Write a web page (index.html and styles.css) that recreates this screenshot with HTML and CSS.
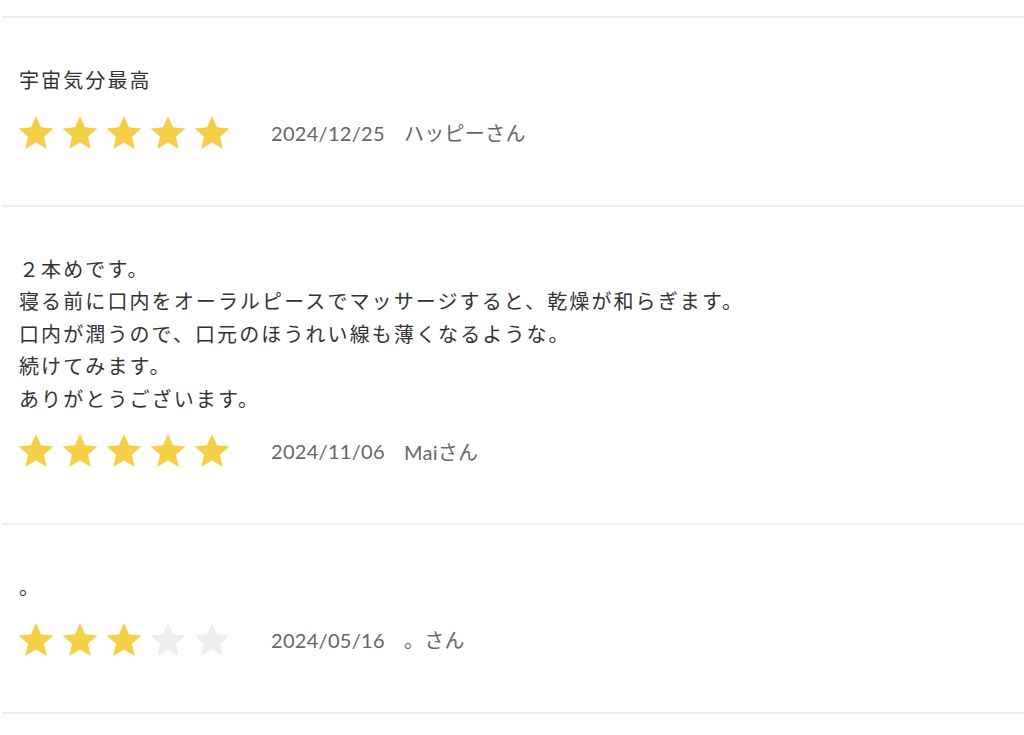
FILE: index.html
```html
<!DOCTYPE html>
<html lang="ja">
	<head>
		<meta charset="utf-8">
		<title>レビュー</title>
		<link rel="stylesheet" href="styles.css">
	</head>
	<body>
		<div id="wrap">
			<ul class="review-list">
				<li class="review">
					<p class="review-text">宇宙気分最高</p>
					<div class="review-meta">
						<div class="stars" data-rate="5"></div>
						<span class="date">2024/12/25</span>
						<span class="name">ハッピーさん</span>
					</div>
				</li>
				<li class="review">
					<p class="review-text">２本めです。<br>寝る前に口内をオーラルピースでマッサージすると、乾燥が和らぎます。<br>口内が潤うので、口元のほうれい線も薄くなるような。<br>続けてみます。<br>ありがとうございます。</p>
					<div class="review-meta">
						<div class="stars" data-rate="5"></div>
						<span class="date">2024/11/06</span>
						<span class="name">Maiさん</span>
					</div>
				</li>
				<li class="review">
					<p class="review-text">。</p>
					<div class="review-meta">
						<div class="stars" data-rate="3"></div>
						<span class="date">2024/05/16</span>
						<span class="name">。さん</span>
					</div>
				</li>
			</ul>
		</div>
		<script>
			// 星の数だけ塗る
			const stars = document.querySelectorAll(".stars");
			stars.forEach(function (box) {
				const rate = Number(box.dataset.rate);
				let html = "";
				for (let i = 0; i < 5; i++) {
					html += '<svg class="star' + (i < rate ? " on" : "") + '" viewBox="0 0 24 24"><polygon points="12,0.6 15.3,8.2 23.6,9 17.3,14.5 19.2,22.6 12,18.4 4.8,22.6 6.7,14.5 0.4,9 8.7,8.2"/></svg>';
				}
				box.innerHTML = html;
			});
		</script>
	</body>
</html>
```

FILE: styles.css
```css
* {
	margin: 0px;
	padding: 0px;
}

body {
	background-color: rgb(255, 255, 255);
	font-family: "Noto Sans CJK JP", sans-serif;
	color: rgb(51, 51, 51);
}

#wrap {
	padding-top: 16px;
	padding-left: 2px;
}

.review-list {
	list-style: none;
	border-top: 2px solid rgb(238, 238, 238);
}

.review {
	border-bottom: 2px solid rgb(238, 238, 238);
	padding: 46px 0px 54px 16px;
}

.review-text {
	font-size: 20px;
	line-height: 32.5px;
	letter-spacing: 2.1px;
	margin-bottom: 18px;
	padding-left: 1px;
}

.review-meta {
	display: flex;
	align-items: center;
	height: 36px;
}

.stars {
	display: flex;
	gap: 8px;
	margin-right: 41px;
}

.star {
	width: 36px;
	height: 36px;
	fill: rgb(238, 238, 238);
}

.star.on {
	fill: rgb(245, 207, 70);
}

.date, .name {
	font-family: "Lato", "Noto Sans CJK JP", sans-serif;
	font-size: 20px;
	color: rgb(102, 102, 102);
	letter-spacing: 0.3px;
}

.date {
	margin-right: 19px;
}
```
